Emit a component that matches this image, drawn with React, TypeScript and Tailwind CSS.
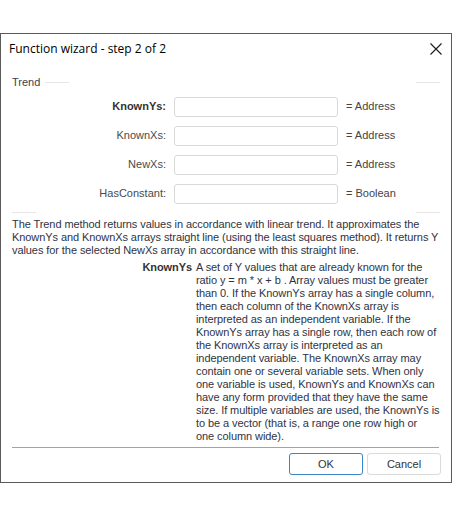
const fields = [
  { label: "KnownYs:", kind: "= Address", bold: true },
  { label: "KnownXs:", kind: "= Address", bold: false },
  { label: "NewXs:", kind: "= Address", bold: false },
  { label: "HasConstant:", kind: "= Boolean", bold: false },
];

const summary = [
  "The Trend method returns values in accordance with linear trend. It approximates the",
  "KnownYs and KnownXs arrays straight line (using the least squares method). It returns Y",
  "values for the selected NewXs array in accordance with this straight line.",
];

const details = [
  "A set of Y values that are already known for the",
  "ratio y = m * x + b . Array values must be greater",
  "than 0. If the KnownYs array has a single column,",
  "then each column of the KnownXs array is",
  "interpreted as an independent variable. If the",
  "KnownYs array has a single row, then each row of",
  "the KnownXs array is interpreted as an",
  "independent variable. The KnownXs array may",
  "contain one or several variable sets. When only",
  "one variable is used, KnownYs and KnownXs can",
  "have any form provided that they have the same",
  "size. If multiple variables are used, the KnownYs is",
  "to be a vector (that is, a range one row high or",
  "one column wide).",
];

const FadedRule = () => (
  <div className="flex h-px items-center">
    <div className="h-px w-[24px] bg-[#e6e6e6]" />
    <div className="flex-1" />
    <div className="h-px w-[24px] bg-[#e6e6e6]" />
  </div>
);

const App = () => {
  return (
    <div className="h-[516px] w-[452px] bg-white pt-[33px] font-['Liberation_Sans',sans-serif] text-[11px] text-[#30333f]">
      <div className="flex h-[450px] w-[452px] flex-col border border-[#5a5a5a]">
        {/* title bar */}
        <div className="flex h-[30px] items-center justify-between pl-[8px] pr-[9px]">
          <span className="font-['Open_Sans',sans-serif] text-[12px] text-black">Function wizard - step 2 of 2</span>
          <svg width="12" height="12" viewBox="0 0 12 12" className="text-[#1a1a1a]">
            <path d="M0.5 0.5 L11.5 11.5 M11.5 0.5 L0.5 11.5" stroke="currentColor" strokeWidth="1.1" />
          </svg>
        </div>

        {/* group header */}
        <div className="mt-[11px] flex h-[14px] items-center px-[11px]">
          <span className="text-[#3b4150]">Trend</span>
          <div className="ml-[5px] h-px w-[24px] bg-[#e6e6e6]" />
          <div className="flex-1" />
          <div className="h-px w-[24px] bg-[#e6e6e6]" />
        </div>

        {/* parameters */}
        <div className="mt-[3px] flex flex-col">
          {fields.map((f) => (
            <div key={f.label} className="flex h-[29px] items-center">
              <div className={`w-[165px] text-right ${f.bold ? "font-bold text-[#333]" : "text-[#4a4a4a]"}`}>{f.label}</div>
              <div className="ml-[8px] h-[20px] w-[164px] rounded-[3px] border border-[#d9d9d9] bg-white" />
              <div className="ml-[8px] text-[#444]">{f.kind}</div>
            </div>
          ))}
        </div>

        <div className="mt-[4px] px-[11px]">
          <FadedRule />
        </div>

        {/* description */}
        <div className="mt-[5px] pl-[11px] leading-[13px] tracking-[-0.08px]">
          {summary.map((l) => (
            <div key={l} className="whitespace-nowrap">{l}</div>
          ))}
        </div>

        <div className="mt-[4px] flex leading-[13px] tracking-[-0.08px]">
          <div className="w-[191px] text-right font-bold text-[#333]">KnownYs</div>
          <div className="ml-[4px] flex flex-col">
            {details.map((l) => (
              <div key={l} className="whitespace-nowrap">{l}</div>
            ))}
          </div>
        </div>

        <div className="mx-[11px] mt-[4px] h-px w-[427px] bg-[#a3a3a3]" />

        {/* buttons */}
        <div className="mt-[5px] flex justify-end gap-[4px] pr-[10px]">
          <button className="h-[22px] w-[74px] rounded-[3px] border border-[#3d86c6] bg-white text-[#333]">OK</button>
          <button className="h-[22px] w-[74px] rounded-[3px] border border-[#dadada] bg-white text-[#333]">Cancel</button>
        </div>
      </div>
    </div>
  );
};

export default App;
